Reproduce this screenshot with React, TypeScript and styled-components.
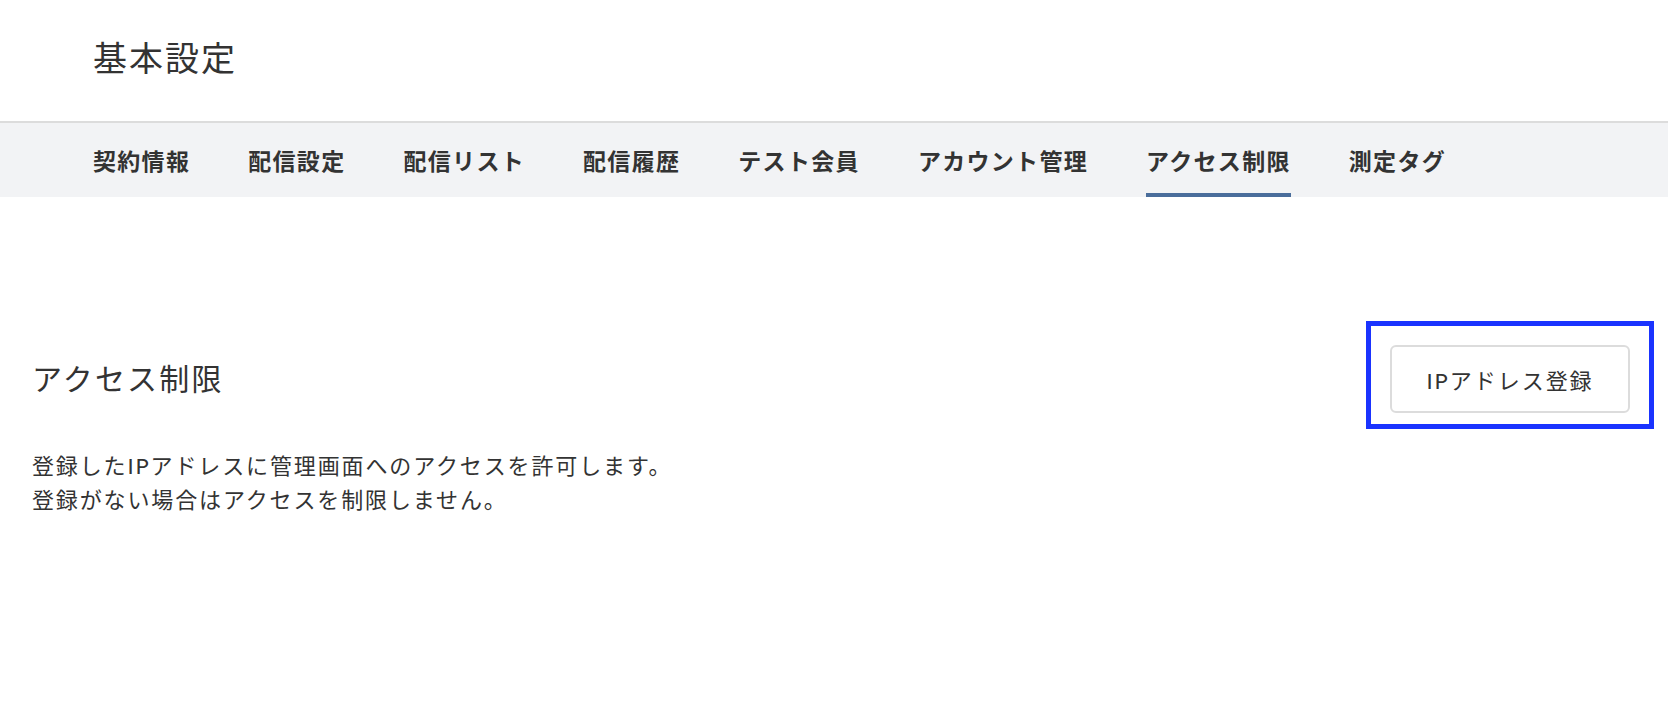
import React from 'react';
import styled, { createGlobalStyle } from 'styled-components';

const GlobalStyle = createGlobalStyle`
  html, body {
    margin: 0;
    padding: 0;
    background: #ffffff;
  }
  body {
    font-family: Lato, "Noto Sans CJK JP", "Noto Sans", sans-serif;
    color: #333333;
    letter-spacing: 0.08em;
  }
  * {
    box-sizing: border-box;
  }
`;

const Page = styled.div`
  width: 100%;
  min-height: 708px;
`;

const Header = styled.header`
  height: 123px;
  padding: 0 0 6px 93px;
  display: flex;
  align-items: center;
  border-bottom: 2px solid #dcdcdc;
`;

const Title = styled.h1`
  margin: 0;
  font-size: 34px;
  font-weight: 400;
  line-height: 1.4;
  letter-spacing: 0.06em;
  color: #333333;
`;

const TabBar = styled.nav`
  height: 74px;
  padding-left: 93px;
  display: flex;
  gap: 58px;
  background: #f2f3f5;
`;

const Tab = styled.a<{ $active?: boolean }>`
  display: flex;
  align-items: center;
  height: 100%;
  padding-top: 4px;
  font-size: 23px;
  font-weight: 700;
  letter-spacing: 0.057em;
  color: #333333;
  text-decoration: none;
  border-bottom: 4px solid ${({ $active }) => ($active ? '#4a6d9b' : 'transparent')};
  cursor: pointer;
`;

const Content = styled.main`
  padding: 124px 14px 0 32px;
`;

const SectionRow = styled.div`
  display: flex;
  justify-content: space-between;
  align-items: center;
`;

const SectionTitle = styled.h2`
  margin: 0;
  padding-top: 6px;
  font-size: 30px;
  font-weight: 400;
  line-height: 1.4;
  letter-spacing: 0.073em;
  color: #333333;
`;

const Highlight = styled.div`
  border: 5px solid #1a33ff;
  padding: 19px 19px 11px;
`;

const Button = styled.button`
  width: 240px;
  height: 68px;
  border: 2px solid #dcdcdc;
  border-radius: 6px;
  background: #ffffff;
  font-family: inherit;
  font-size: 22px;
  letter-spacing: 0.09em;
  color: #333333;
  cursor: pointer;
`;

const Description = styled.p`
  margin: 20px 0 0;
  font-size: 22px;
  line-height: 34px;
  letter-spacing: 0.085em;
  color: #333333;
`;

const tabs = [
  '契約情報',
  '配信設定',
  '配信リスト',
  '配信履歴',
  'テスト会員',
  'アカウント管理',
  'アクセス制限',
  '測定タグ',
];

export default function App() {
  return (
    <Page>
      <GlobalStyle />
      <Header>
        <Title>基本設定</Title>
      </Header>
      <TabBar>
        {tabs.map((t) => (
          <Tab key={t} $active={t === 'アクセス制限'}>
            {t}
          </Tab>
        ))}
      </TabBar>
      <Content>
        <SectionRow>
          <SectionTitle>アクセス制限</SectionTitle>
          <Highlight>
            <Button>IPアドレス登録</Button>
          </Highlight>
        </SectionRow>
        <Description>
          登録したIPアドレスに管理画面へのアクセスを許可します。
          <br />
          登録がない場合はアクセスを制限しません。
        </Description>
      </Content>
    </Page>
  );
}
